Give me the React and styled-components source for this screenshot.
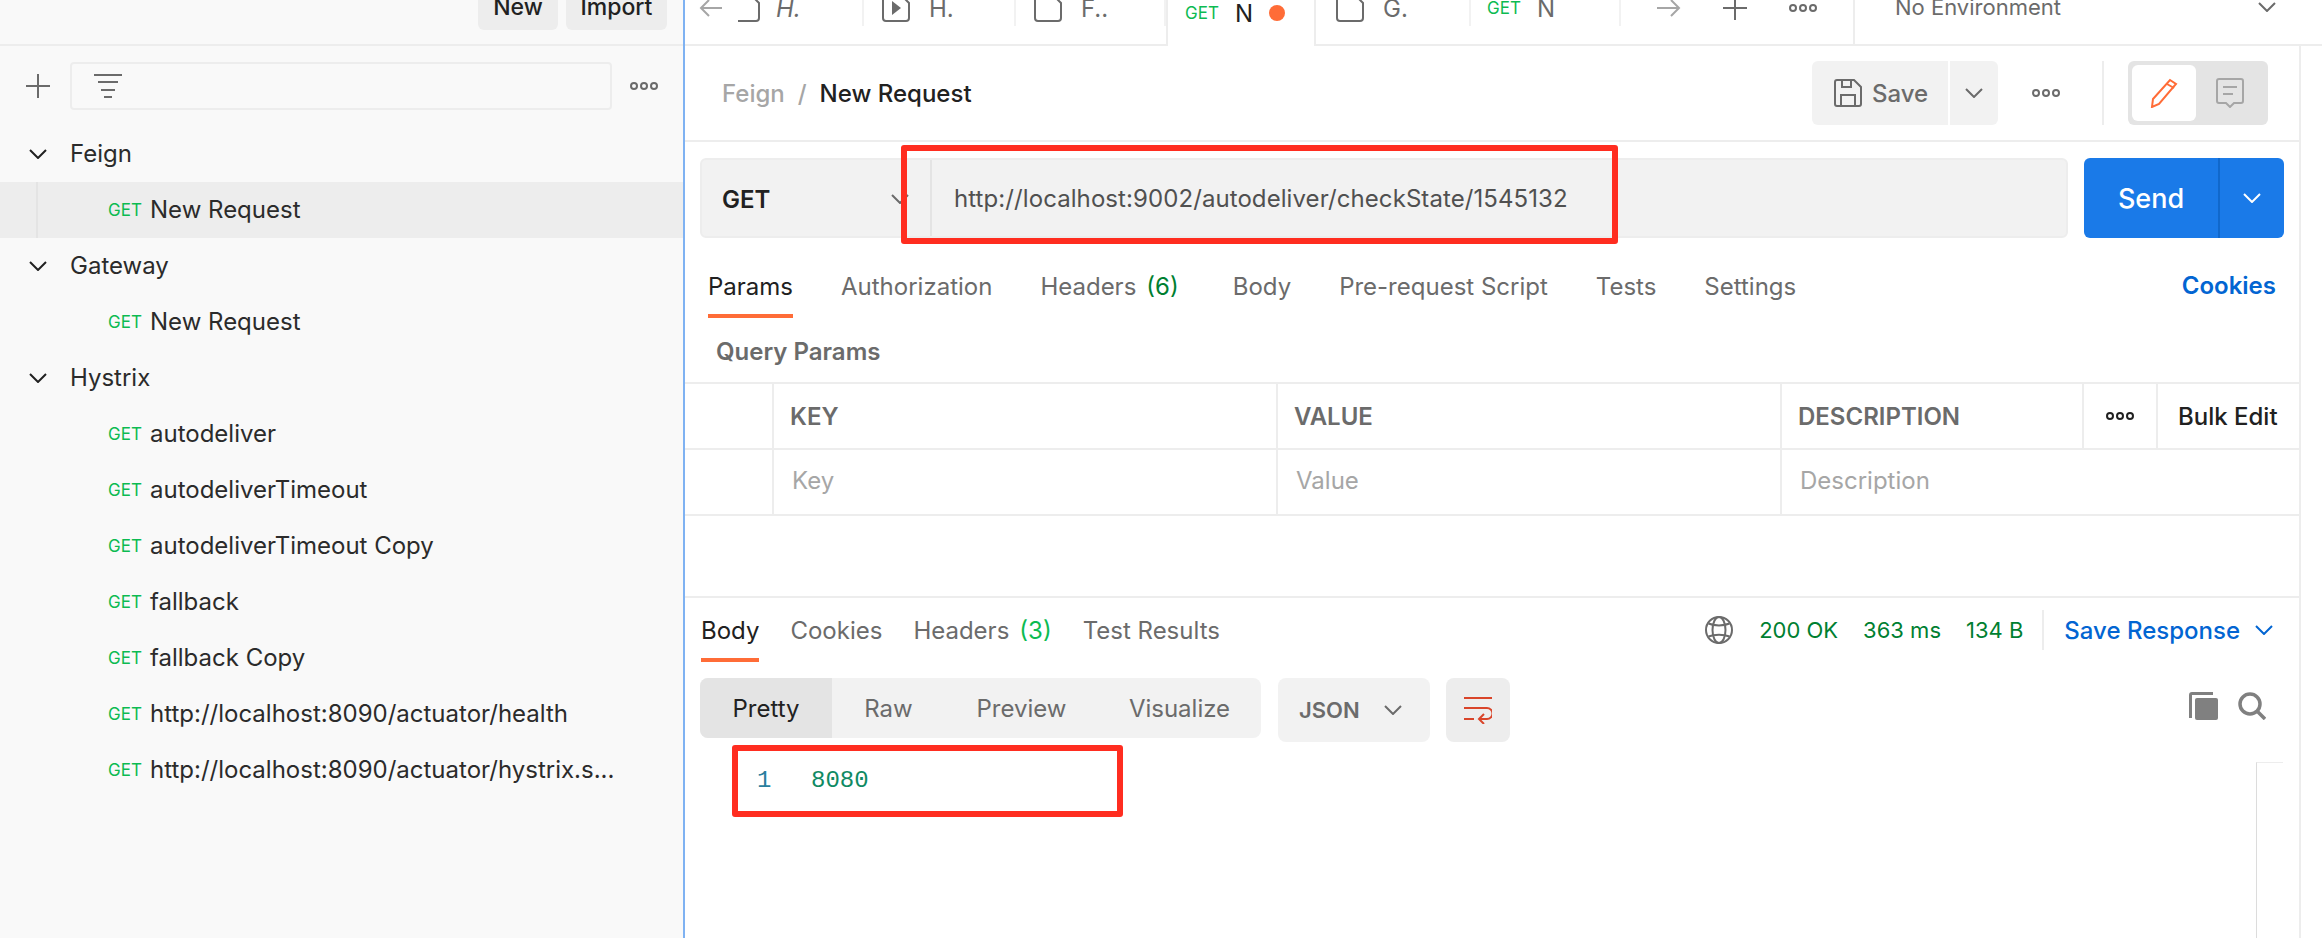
import React from 'react'
import styled, { createGlobalStyle } from 'styled-components'

const GlobalStyle = createGlobalStyle`
html, body {
    margin: 0;
    padding: 0;
    background: #fff;
}
body {
    font-family: Inter, "Noto Sans", sans-serif;
    font-size: 24px;
    color: #212121;
    overflow: hidden;
}
* {
    box-sizing: border-box;
}
`

const Page = styled.div`
    position: relative;
    display: flex;
    width: 2322px;
    height: 938px;
    overflow: hidden;
`

/* ---------- sidebar ---------- */
const Sidebar = styled.aside`
    width: 685px;
    flex: none;
    background: #f9f9f9;
    border-right: 2px solid #7fb2f2;
`
const SideTop = styled.div`
    display: flex;
    justify-content: flex-end;
    gap: 8px;
    height: 46px;
    padding-right: 16px;
    border-bottom: 2px solid #ededed;
`
const SideButton = styled.div`
    display: flex;
    align-items: center;
    justify-content: center;
    width: ${p => p.$w}px;
    height: 46px;
    margin-top: -16px;
    background: #ededed;
    border-radius: 6px;
    font-weight: 500;
    font-size: 23px;
`
const FilterBar = styled.div`
    display: flex;
    align-items: center;
    height: 80px;
    padding: 0 25px 0 26px;
`
const FilterBox = styled.div`
    display: flex;
    align-items: center;
    width: 542px;
    height: 48px;
    margin: 0 18px 0 20px;
    padding-left: 22px;
    border: 2px solid #ededed;
    border-radius: 4px;
`
const TreeRow = styled.div`
    position: relative;
    display: flex;
    align-items: center;
    height: 56px;
    padding-left: ${p => (p.$folder ? 29 : 108)}px;
    padding-bottom: 1px;
    background: ${p => (p.$selected ? '#ededed' : 'transparent')};
    ${p => p.$selected && `
    &::before {
        content: "";
        position: absolute;
        left: 36px;
        top: 0;
        bottom: 0;
        width: 2px;
        background: #e4e4e4;
    }`}
`
const FolderName = styled.span`
    margin-left: 23px;
    color: #2b2b2b;
`
const MethodTag = styled.span`
    width: 42px;
    flex: none;
    font-size: 17px;
    color: #0cbb52;
`
const RequestName = styled.span`
    color: #2b2b2b;
    white-space: nowrap;
`

/* ---------- tab strip ---------- */
const Workspace = styled.main`
    flex: 1;
    min-width: 0;
    display: flex;
    flex-direction: column;
`
const TabStrip = styled.div`
    display: flex;
    height: 46px;
    border-bottom: 2px solid #ededed;
`
const Tab = styled.div`
    display: flex;
    align-items: center;
    gap: ${p => p.$gap ?? 19}px;
    width: ${p => p.$w}px;
    flex: none;
    height: 36px;
    margin-top: -10px;
    padding-left: ${p => p.$pad ?? 18}px;
    border-right: 2px solid #f2f2f2;
    color: #6b6b6b;
    font-style: ${p => (p.$preview ? 'italic' : 'normal')};
    white-space: nowrap;
`
const ActiveTab = styled.div`
    display: flex;
    align-items: center;
    width: 150px;
    flex: none;
    height: 56px;
    margin-top: -10px;
    padding: 0 0 10px 17px;
    background: #fff;
    border-left: 2px solid #ededed;
    border-right: 2px solid #ededed;
    position: relative;
    z-index: 1;
    color: #212121;
`
const TabMethod = styled.span`
    width: 50px;
    flex: none;
    font-size: 17px;
    color: #0cbb52;
`
const UnsavedDot = styled.span`
    width: 16px;
    height: 16px;
    margin-left: 16px;
    border-radius: 50%;
    background: #ff6c37;
`
const StripTools = styled.div`
    display: flex;
    align-items: center;
    gap: 42px;
    width: 234px;
    flex: none;
    height: 44px;
    padding: 0 0 28px 36px;
    border-right: 2px solid #ededed;
`
const EnvSelect = styled.div`
    flex: 1;
    display: flex;
    align-items: center;
    justify-content: space-between;
    height: 44px;
    padding: 0 46px 30px 40px;
    font-size: 22px;
    color: #6b6b6b;
`

/* ---------- request pane ---------- */
const Pane = styled.div`
    flex: 1;
    display: flex;
    flex-direction: column;
    margin-right: 21px;
    border-right: 2px solid #ededed;
`
const TitleBar = styled.div`
    display: flex;
    align-items: center;
    height: 96px;
    padding: 0 31px 0 37px;
    border-bottom: 2px solid #ededed;
`
const Crumb = styled.span`
    font-weight: 500;
    color: ${p => (p.$current ? '#212121' : '#a6a6a6')};
`
const CrumbSlash = styled.span`
    margin: 0 13px;
    font-weight: 500;
    color: #a6a6a6;
`
const TitleActions = styled.div`
    display: flex;
    align-items: center;
    margin-left: auto;
`
const SaveButton = styled.div`
    display: flex;
    align-items: center;
    gap: 10px;
    width: 136px;
    height: 64px;
    padding-left: 22px;
    background: #f2f2f2;
    border-radius: 6px 0 0 6px;
    font-weight: 500;
    color: #6b6b6b;
`
const SaveCaret = styled.div`
    display: flex;
    align-items: center;
    justify-content: center;
    width: 48px;
    height: 64px;
    margin-left: 2px;
    background: #f2f2f2;
    border-radius: 0 6px 6px 0;
`
const ActionDots = styled.div`
    display: flex;
    margin: 0 42px 0 34px;
`
const ViewSwitch = styled.div`
    display: flex;
    width: 140px;
    height: 64px;
    margin-left: 24px;
    padding: 4px;
    background: #e4e4e4;
    border-radius: 6px;
`
const ViewOption = styled.div`
    display: flex;
    align-items: center;
    justify-content: center;
    width: ${p => (p.$on ? 64 : 68)}px;
    background: ${p => (p.$on ? '#fff' : 'transparent')};
    border-radius: 6px;
`
const VDivider = styled.div`
    width: 2px;
    height: ${p => p.$h}px;
    background: #ededed;
`
const UrlRow = styled.div`
    display: flex;
    gap: 16px;
    padding: 16px 15px 0;
`
const UrlBox = styled.div`
    flex: 1;
    display: flex;
    height: 80px;
    background: #f2f2f2;
    border: 2px solid #ededed;
    border-radius: 6px;
`
const MethodSelect = styled.div`
    display: flex;
    align-items: center;
    justify-content: space-between;
    width: 230px;
    flex: none;
    padding: 2px 21px 0 20px;
    border-right: 2px solid #e4e4e4;
    font-weight: 600;
`
const UrlText = styled.div`
    display: flex;
    align-items: center;
    padding-left: 22px;
    letter-spacing: 0.08px;
    color: #505050;
`
const SendButton = styled.div`
    display: flex;
    width: 200px;
    height: 80px;
    background: #1a7ae8;
    border-radius: 6px;
    color: #fff;
`
const SendLabel = styled.div`
    flex: 1;
    display: flex;
    align-items: center;
    justify-content: center;
    font-size: 27px;
    font-weight: 500;
    border-right: 2px solid #1068cc;
`
const SendCaret = styled.div`
    display: flex;
    align-items: center;
    justify-content: center;
    width: 64px;
`
const TabRow = styled.div`
    display: flex;
    align-items: flex-start;
    gap: ${p => p.$gap}px;
    padding: ${p => p.$top}px 23px 0 ${p => p.$left}px;
`
const PaneTab = styled.div`
    display: flex;
    align-items: center;
    height: 52px;
    padding-bottom: 8px;
    border-bottom: 4px solid ${p => (p.$on ? '#ff6c37' : 'transparent')};
    color: ${p => (p.$on ? '#212121' : '#6b6b6b')};
    white-space: nowrap;
    margin-right: ${p => p.$after ?? 0}px;
`
const Count = styled.span`
    margin-left: 10px;
    color: ${p => p.$color};
`
const CookiesLink = styled.div`
    margin-left: auto;
    height: 40px;
    line-height: 40px;
    font-weight: 600;
    color: #0265d2;
`
const SectionLabel = styled.div`
    display: flex;
    align-items: center;
    height: 64px;
    padding: 2px 0 0 31px;
    font-weight: 600;
    color: #6b6b6b;
`
const ParamsTable = styled.div`
    display: grid;
    grid-template-columns: 89px 504px 504px 302px 74px 1fr;
    grid-auto-rows: 66px;
    border-top: 2px solid #ededed;
`
const Cell = styled.div`
    display: flex;
    align-items: center;
    justify-content: ${p => (p.$center ? 'center' : 'flex-start')};
    grid-column: ${p => p.$span ?? 'auto'};
    padding-left: ${p => (p.$center ? 0 : p.$pad ?? 16)}px;
    padding-bottom: ${p => p.$lift ?? 0}px;
    border-bottom: 2px solid #ededed;
    border-right: ${p => (p.$last ? 0 : 2)}px solid #ededed;
    color: ${p => p.$color ?? '#a6a6a6'};
    font-weight: ${p => p.$weight ?? 400};
`

/* ---------- response pane ---------- */
const Response = styled.section`
    flex: 1;
    display: flex;
    flex-direction: column;
    margin-top: 80px;
    border-top: 2px solid #ededed;
`
const ResponseTabs = styled.div`
    display: flex;
    align-items: flex-start;
`
const Stats = styled.div`
    display: flex;
    align-items: center;
    height: 40px;
    margin: 12px 26px 0 auto;
    font-size: 22px;
    color: #007f31;
`
const Stat = styled.span`
    margin-left: ${p => p.$left}px;
`
const SaveResponse = styled.span`
    margin: 0 15px 0 20px;
    font-size: 24px;
    font-weight: 500;
    color: #0265d2;
`
const ResponseTools = styled.div`
    display: flex;
    align-items: flex-start;
    padding: 16px 33px 0 15px;
`
const Segmented = styled.div`
    display: flex;
    width: 561px;
    height: 60px;
    background: #f2f2f2;
    border-radius: 8px;
    overflow: hidden;
`
const Segment = styled.div`
    display: flex;
    align-items: center;
    justify-content: center;
    width: ${p => p.$w}px;
    background: ${p => (p.$on ? '#e4e4e4' : 'transparent')};
    color: ${p => (p.$on ? '#212121' : '#6b6b6b')};
`
const FormatSelect = styled.div`
    display: flex;
    align-items: center;
    justify-content: space-between;
    width: 152px;
    height: 64px;
    margin-left: 17px;
    padding: 0 28px 0 21px;
    background: #f2f2f2;
    border-radius: 8px;
    font-size: 22px;
    font-weight: 600;
    color: #6b6b6b;
`
const WrapButton = styled.div`
    display: flex;
    align-items: center;
    justify-content: center;
    width: 64px;
    height: 64px;
    margin-left: 16px;
    background: #ededed;
    border-radius: 8px;
`
const ToolIcons = styled.div`
    display: flex;
    align-items: center;
    gap: 20px;
    height: 56px;
    margin-left: auto;
`
const CodeArea = styled.div`
    flex: 1;
    display: flex;
    justify-content: space-between;
`
const CodeLine = styled.div`
    display: flex;
    height: 28px;
    margin: 25px 0 0 72px;
    font-family: "Liberation Mono", monospace;
    font-size: 24px;
    line-height: 28px;
`
const LineNo = styled.span`
    width: 54px;
    color: #2a7f9e;
`
const CodeValue = styled.span`
    color: #0f8a63;
`
const ScrollTrack = styled.div`
    width: 27px;
    margin: 20px 16px 0 0;
    border-top: 1px solid #ededed;
    border-left: 1px solid #dcdcdc;
`

/* red annotation boxes drawn over the screenshot */
const Callout = styled.div`
    position: absolute;
    left: ${p => p.$x}px;
    top: ${p => p.$y}px;
    width: ${p => p.$w}px;
    height: ${p => p.$h}px;
    border: 6px solid #ff2d20;
    border-radius: 3px;
    z-index: 5;
`

/* ---------- icons ---------- */
const Chevron = ({ color = '#212121', w = 18 }) => (
    <svg width={w} height="10" viewBox="0 0 18 10" fill="none" stroke={color} strokeWidth="2">
        <polyline points="1,1 9,9 17,1" />
    </svg>
)
const Plus = ({ color = '#6b6b6b' }) => (
    <svg width="24" height="24" viewBox="0 0 24 24" stroke={color} strokeWidth="2">
        <path d="M12 0V24M0 12H24" />
    </svg>
)
const Dots = ({ color = '#6b6b6b' }) => (
    <svg width="28" height="10" viewBox="0 0 28 10" fill="none" stroke={color} strokeWidth="2">
        <circle cx="4" cy="5" r="3" />
        <circle cx="14" cy="5" r="3" />
        <circle cx="24" cy="5" r="3" />
    </svg>
)
const FilterIcon = () => (
    <svg width="28" height="24" viewBox="0 0 28 24" stroke="#6b6b6b" strokeWidth="2">
        <path d="M0 1H28M4 8H24M7 16H21M10 23H18" />
    </svg>
)
const DocIcon = ({ play, clip }) => (
    <svg width={clip ? 22 : 28} height="28" viewBox={clip ? '6 0 22 28' : '0 0 28 28'} fill="none" stroke="#6b6b6b" strokeWidth="2">
        <path d="M4 1H19L27 9V24a3 3 0 0 1-3 3H4a3 3 0 0 1-3-3V4a3 3 0 0 1 3-3Z" />
        {play && <path d="M10 7L19 14L10 21Z" fill="#6b6b6b" stroke="none" />}
    </svg>
)
const ArrowLeft = () => (
    <svg width="23" height="18" viewBox="0 0 23 18" fill="none" stroke="#a6a6a6" strokeWidth="2">
        <path d="M23 9H2M10 1L2 9L10 17" />
    </svg>
)
const ArrowRight = () => (
    <svg width="24" height="18" viewBox="0 0 24 18" fill="none" stroke="#a6a6a6" strokeWidth="2">
        <path d="M0 9H22M14 1L22 9L14 17" />
    </svg>
)
const SaveIcon = () => (
    <svg width="28" height="28" viewBox="0 0 28 28" fill="none" stroke="#6b6b6b" strokeWidth="2">
        <path d="M3 1H20L27 8V25a2 2 0 0 1-2 2H3a2 2 0 0 1-2-2V3a2 2 0 0 1 2-2Z" />
        <path d="M8 1V8H17V1M7 27V16H21V27" />
    </svg>
)
const PencilIcon = () => (
    <svg width="28" height="30" viewBox="0 0 28 30" fill="none" stroke="#ff6c37" strokeWidth="2">
        <path d="M20 2L26 6L9 26L2 29L3 21Z" />
        <path d="M17 6L24 10" />
    </svg>
)
const NoteIcon = () => (
    <svg width="28" height="30" viewBox="0 0 28 30" fill="none" stroke="#a6a6a6" strokeWidth="2">
        <path d="M3 1H25a2 2 0 0 1 2 2V23a2 2 0 0 1-2 2H18L14 29L10 25H3a2 2 0 0 1-2-2V3a2 2 0 0 1 2-2Z" />
        <path d="M7 9H21M7 16H17" />
    </svg>
)
const WrapIcon = () => (
    <svg width="28" height="28" viewBox="0 0 28 28" fill="none" stroke="#d9452a" strokeWidth="2">
        <path d="M0 2H28M0 12H23a4.5 4.5 0 0 1 0 11H15M20 18L15 23L20 28M0 23H10" />
    </svg>
)
const GlobeIcon = () => (
    <svg width="28" height="28" viewBox="0 0 28 28" fill="none" stroke="#6b6b6b" strokeWidth="2">
        <circle cx="14" cy="14" r="13" />
        <ellipse cx="14" cy="14" rx="6.5" ry="13" />
        <path d="M3.5 7.5C9 10 19 10 24.5 7.5M3.5 20.5C9 18 19 18 24.5 20.5" />
    </svg>
)
const CopyIcon = () => (
    <svg width="29" height="28" viewBox="0 0 29 28" fill="#808080">
        <path d="M0 26V3a3 3 0 0 1 3-3H24V3H3V26Z" />
        <rect x="6" y="6" width="23" height="22" rx="2" />
    </svg>
)
const SearchIcon = () => (
    <svg width="28" height="28" viewBox="0 0 28 28" fill="none" stroke="#808080" strokeWidth="3.5">
        <circle cx="12" cy="12" r="10" />
        <path d="M19 19L27 27" />
    </svg>
)

const hystrixRequests = [
    'autodeliver',
    'autodeliverTimeout',
    'autodeliverTimeout Copy',
    'fallback',
    'fallback Copy',
    'http://localhost:8090/actuator/health',
    'http://localhost:8090/actuator/hystrix.s...',
]

const Folder = ({ name }) => (
    <TreeRow $folder>
        <Chevron />
        <FolderName>{name}</FolderName>
    </TreeRow>
)
const Request = ({ name, selected }) => (
    <TreeRow $selected={selected}>
        <MethodTag>GET</MethodTag>
        <RequestName>{name}</RequestName>
    </TreeRow>
)

const App = () => {
    return (
        <Page>
            <GlobalStyle />
            <Sidebar>
                <SideTop>
                    <SideButton $w={80}>New</SideButton>
                    <SideButton $w={101}>Import</SideButton>
                </SideTop>
                <FilterBar>
                    <Plus />
                    <FilterBox><FilterIcon /></FilterBox>
                    <Dots />
                </FilterBar>
                <Folder name="Feign" />
                <Request name="New Request" selected />
                <Folder name="Gateway" />
                <Request name="New Request" />
                <Folder name="Hystrix" />
                {hystrixRequests.map((r, i) => <Request key={i} name={r} />)}
            </Sidebar>

            <Workspace>
                <TabStrip>
                    <Tab $w={179} $pad={14} $gap={16} $preview>
                        <ArrowLeft />
                        <DocIcon clip />
                        <span>H.</span>
                    </Tab>
                    <Tab $w={152}><DocIcon play /><span>H.</span></Tab>
                    <Tab $w={150}><DocIcon /><span>F..</span></Tab>
                    <ActiveTab>
                        <TabMethod>GET</TabMethod>
                        <span>N</span>
                        <UnsavedDot />
                    </ActiveTab>
                    <Tab $w={155} $pad={20}><DocIcon /><span>G.</span></Tab>
                    <Tab $w={150} $pad={16} $gap={0}><TabMethod>GET</TabMethod><span>N</span></Tab>
                    <StripTools>
                        <ArrowRight />
                        <Plus />
                        <Dots />
                    </StripTools>
                    <EnvSelect>
                        <span>No Environment</span>
                        <Chevron color="#6b6b6b" />
                    </EnvSelect>
                </TabStrip>

                <Pane>
                    <TitleBar>
                        <Crumb>Feign</Crumb>
                        <CrumbSlash>/</CrumbSlash>
                        <Crumb $current>New Request</Crumb>
                        <TitleActions>
                            <SaveButton><SaveIcon />Save</SaveButton>
                            <SaveCaret><Chevron color="#6b6b6b" /></SaveCaret>
                            <ActionDots><Dots /></ActionDots>
                            <VDivider $h={64} />
                            <ViewSwitch>
                                <ViewOption $on><PencilIcon /></ViewOption>
                                <ViewOption><NoteIcon /></ViewOption>
                            </ViewSwitch>
                        </TitleActions>
                    </TitleBar>

                    <UrlRow>
                        <UrlBox>
                            <MethodSelect>GET<Chevron color="#6b6b6b" /></MethodSelect>
                            <UrlText>http://localhost:9002/autodeliver/checkState/1545132</UrlText>
                        </UrlBox>
                        <SendButton>
                            <SendLabel>Send</SendLabel>
                            <SendCaret><Chevron color="#fff" /></SendCaret>
                        </SendButton>
                    </UrlRow>

                    <TabRow $gap={48} $top={28} $left={23}>
                        <PaneTab $on>Params</PaneTab>
                        <PaneTab>Authorization</PaneTab>
                        <PaneTab $after={6}>Headers<Count $color="#007f31">(6)</Count></PaneTab>
                        <PaneTab>Body</PaneTab>
                        <PaneTab>Pre-request Script</PaneTab>
                        <PaneTab>Tests</PaneTab>
                        <PaneTab>Settings</PaneTab>
                        <CookiesLink>Cookies</CookiesLink>
                    </TabRow>

                    <SectionLabel>Query Params</SectionLabel>
                    <ParamsTable>
                        <Cell />
                        <Cell $color="#6b6b6b" $weight={600}>KEY</Cell>
                        <Cell $color="#6b6b6b" $weight={600}>VALUE</Cell>
                        <Cell $color="#6b6b6b" $weight={600}>DESCRIPTION</Cell>
                        <Cell $center><Dots color="#212121" /></Cell>
                        <Cell $color="#212121" $weight={500} $pad={20} $last>Bulk Edit</Cell>
                        <Cell />
                        <Cell $pad={18} $lift={4}>Key</Cell>
                        <Cell $pad={18} $lift={4}>Value</Cell>
                        <Cell $pad={18} $lift={4} $span="4 / span 3" $last>Description</Cell>
                    </ParamsTable>

                    <Response>
                        <ResponseTabs>
                            <TabRow $gap={31} $top={12} $left={16}>
                                <PaneTab $on>Body</PaneTab>
                                <PaneTab>Cookies</PaneTab>
                                <PaneTab>Headers<Count $color="#0cbb52">(3)</Count></PaneTab>
                                <PaneTab>Test Results</PaneTab>
                            </TabRow>
                            <Stats>
                                <GlobeIcon />
                                <Stat $left={26}>200 OK</Stat>
                                <Stat $left={25}>363 ms</Stat>
                                <Stat $left={25}>134 B</Stat>
                                <Stat $left={19}><VDivider $h={40} /></Stat>
                                <SaveResponse>Save Response</SaveResponse>
                                <Chevron color="#0265d2" />
                            </Stats>
                        </ResponseTabs>

                        <ResponseTools>
                            <Segmented>
                                <Segment $w={132} $on>Pretty</Segment>
                                <Segment $w={113}>Raw</Segment>
                                <Segment $w={153}>Preview</Segment>
                                <Segment $w={163}>Visualize</Segment>
                            </Segmented>
                            <FormatSelect>JSON<Chevron color="#6b6b6b" /></FormatSelect>
                            <WrapButton><WrapIcon /></WrapButton>
                            <ToolIcons>
                                <CopyIcon />
                                <SearchIcon />
                            </ToolIcons>
                        </ResponseTools>

                        <CodeArea>
                            <CodeLine>
                                <LineNo>1</LineNo>
                                <CodeValue>8080</CodeValue>
                            </CodeLine>
                            <ScrollTrack />
                        </CodeArea>
                    </Response>
                </Pane>
            </Workspace>

            <Callout $x={901} $y={145} $w={717} $h={99} />
            <Callout $x={732} $y={745} $w={391} $h={72} />
        </Page>
    )
}

export default App
